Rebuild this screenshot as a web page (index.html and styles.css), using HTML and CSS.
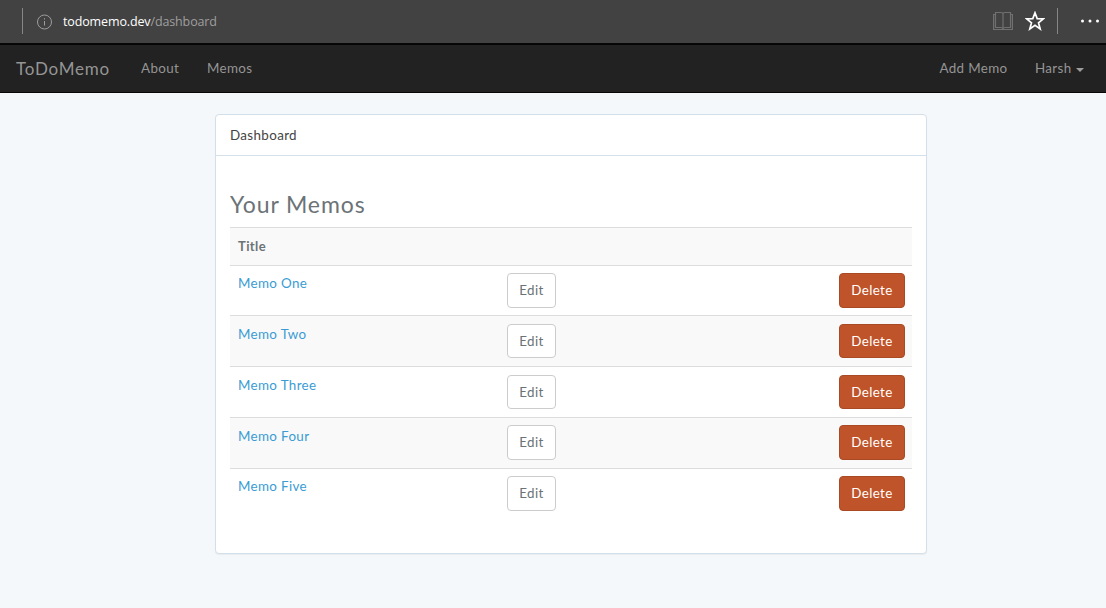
FILE: index.html
```
<!DOCTYPE html>
<html lang="en">
<head>
<meta charset="utf-8">
<title>ToDoMemo</title>
<link rel="stylesheet" href="styles.css">
</head>
<body>
<header class="browser-bar">
  <span class="divider"></span>
  <svg class="info" width="16" height="16" viewBox="0 0 16 16"><circle cx="7.5" cy="8" r="7" fill="none" stroke="#9d9d9d"/><path d="M7.5 7v4.5M7.5 4.2v1.3" stroke="#9d9d9d" fill="none"/></svg>
  <span class="address"><span class="host">todomemo.dev</span><span class="path">/dashboard</span></span>
  <svg class="book" width="20" height="20" viewBox="0 0 20 20" fill="none" stroke="#707070"><path d="M2.5 1.5H8Q10 1.5 10 3Q10 1.5 12 1.5H17.5V16.5H12.5Q10 16.5 10 18Q10 16.5 7.5 16.5H2.5ZM10 3V18" stroke-width="1.2"/><path d="M2.5 3.5H.6V18.5H19.4V3.5H17.5" stroke-width="1.2"/></svg>
  <svg class="star" width="20" height="20" viewBox="0 0 20 20"><path d="M10 1.8L12.2 7.6L18.4 7.8L13.5 11.8L15.2 18L10 14.4L4.8 18L6.5 11.8L1.6 7.8L7.8 7.6Z" fill="none" stroke="#fff" stroke-width="1.7"/></svg>
  <span class="divider"></span>
  <svg class="more" width="20" height="4" viewBox="0 0 20 4" fill="#fff"><circle cx="2.5" cy="2" r="1.5"/><circle cx="10" cy="2" r="1.5"/><circle cx="17.5" cy="2" r="1.5"/></svg>
</header>
<nav class="navbar">
  <a class="brand">ToDoMemo</a>
  <a class="about">About</a>
  <a class="memos">Memos</a>
  <a class="add">Add Memo</a>
  <a class="user">Harsh</a><span class="caret"></span>
</nav>
<main class="panel">
  <div class="panel-heading"><span>Dashboard</span></div>
  <div class="panel-body">
    <h3><span>Your Memos</span></h3>
    <div class="table">
      <div class="head"><span>Title</span></div>
      <div class="row"><a class="title">Memo One</a><a class="btn edit">Edit</a><a class="btn delete">Delete</a></div>
      <div class="row"><a class="title">Memo Two</a><a class="btn edit">Edit</a><a class="btn delete">Delete</a></div>
      <div class="row"><a class="title">Memo Three</a><a class="btn edit">Edit</a><a class="btn delete">Delete</a></div>
      <div class="row"><a class="title">Memo Four</a><a class="btn edit">Edit</a><a class="btn delete">Delete</a></div>
      <div class="row"><a class="title">Memo Five</a><a class="btn edit">Edit</a><a class="btn delete">Delete</a></div>
    </div>
  </div>
</main>
</body>
</html>
```
FILE: styles.css
```
* { box-sizing: border-box; }
body {
  margin: 0;
  height: 608px;
  overflow: hidden;
  background: #f5f8fa;
  color: #6b7377;
  font: 13.4px/21px Lato, "Open Sans", sans-serif;
  letter-spacing: .35px;
}
.browser-bar {
  display: flex;
  align-items: center;
  height: 45px;
  padding: 0 6px 2px 22px;
  background: #424242;
  border-bottom: 2px solid #060606;
  letter-spacing: 0;
}
.divider { width: 1px; height: 26px; background: #868686; }
.info { margin: 2px 0 0 14px; }
.address { margin: 2px 0 0 10px; font: 12.5px/20px "Open Sans", sans-serif; letter-spacing: -.13px; }
.host { color: #fff; }
.path { color: #9f9f9f; }
.book { margin: 1px 0 0 auto; }
.star { margin: 0 12px; }
.more { margin-left: 22px; }
.navbar {
  display: flex;
  align-items: center;
  height: 48px;
  padding: 0 22px 0 16px;
  background: #222;
  border-bottom: 1px solid #080808;
  color: #959595;
}
.brand { width: 125px; font-size: 17px; letter-spacing: .8px; }
.about { width: 66px; }
.add { margin-left: auto; margin-right: 27.5px; }
.caret { margin-left: 4.5px; margin-top: 2px; border: 4px solid transparent; border-top-color: #9d9d9d; border-bottom: 0; }
.panel {
  width: 712px;
  height: 440px;
  margin: 21px 0 0 215px;
  background: #fff;
  border: 1px solid #d3e0e9;
  border-radius: 4px;
  box-shadow: 0 1px 1px rgba(0, 0, 0, .05);
}
.panel-heading { height: 41px; padding: 10px 14px; color: #444; border-bottom: 1px solid #d3e0e9; }
.panel-body { padding: 34px 14px 0; }
h3 { height: 36.7px; margin: 0; font-size: 23px; line-height: 28px; font-weight: 400; letter-spacing: .9px; }
.head { height: 38px; padding: 8px 8px; font-size: 13px; font-weight: 700; letter-spacing: .4px; background: #f9f9f9; border-top: 1px solid #ddd; }
.row {
  display: grid;
  grid-template-columns: 269px 1fr auto;
  align-items: start;
  height: 50.75px;
  padding: 7.4px 7px 0 8px;
  border-top: 1px solid #ddd;
}
.row:nth-child(odd) { background: #f9f9f9; }
.title { margin-top: .2px; color: #3b9cd4; }
.btn {
  height: 34.45px;
  text-align: center;
  line-height: 32.4px;
  border: 1px solid #ccc;
  border-radius: 4px;
}
.edit { width: 49px; background: #fff; }
.delete { width: 66px; color: #fff; background: #bf5329; border-color: #aa4a24; }
```
